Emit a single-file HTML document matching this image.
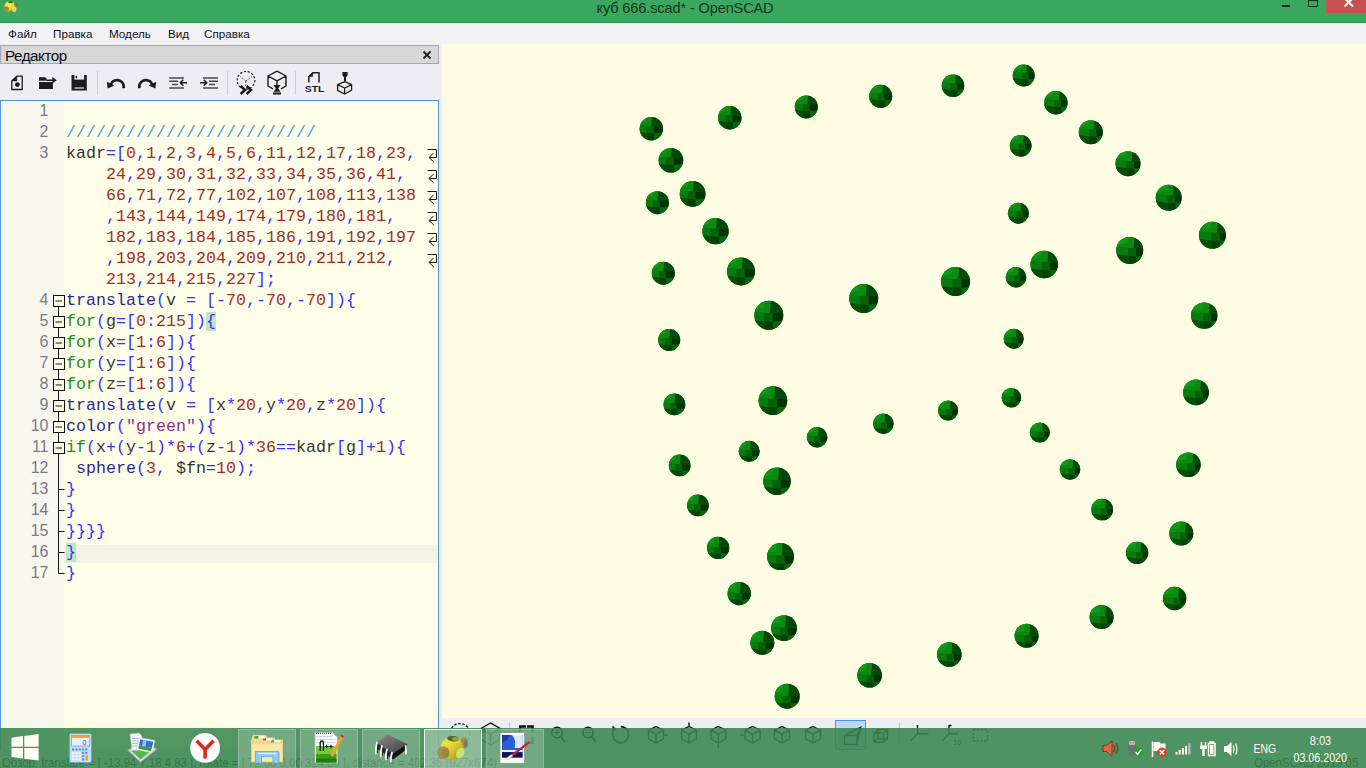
<!DOCTYPE html>
<html lang="ru">
<head>
<meta charset="utf-8">
<title>куб 666.scad* - OpenSCAD</title>
<style>
*{box-sizing:border-box;margin:0;padding:0}
html,body{width:1366px;height:768px;overflow:hidden}
body{position:relative;background:#eeeef2;font-family:"Liberation Sans",sans-serif;color:#000}
.abs{position:absolute}
#titlebar{left:0;top:0;width:1366px;height:23px;background:#3aa85e;border-bottom:1px solid #348f52}
#title{left:2px;top:-2px;width:1366px;text-align:center;font-size:14.5px;line-height:20px;color:#143522;letter-spacing:-.1px}
#wc-min{left:1282px;top:5px;width:8px;height:2px;background:#12301f}
#wc-max{left:1308px;top:0;width:10px;height:7px;border:1px solid #12301f}
#wc-close{left:1326px;top:0;width:40px;height:13px;background:#c75050}
#menubar{left:0;top:23px;width:1366px;height:21px;background:#f3f3f6;font-size:11.7px;line-height:21px;color:#10101c}
#menubar span{position:absolute;top:0}
#docktitle{left:0;top:45px;width:439px;height:19px;background:#d7d7d7;border:1px solid #a9a9a9;font-size:15.2px;line-height:20px;padding-left:4px;color:#0c0c18;letter-spacing:-.45px}
#toolbar{left:0;top:64px;width:439px;height:36px}
#editor{left:0;top:100px;width:439px;height:651px;border:1px solid #4f94de;background:#fefee9;overflow:hidden}
#margin{left:0;top:0;width:63px;height:100%;background:#f7f7ee}
#nums{left:0;top:-1px;width:47.5px;text-align:right;font-size:16px;line-height:21px;color:#7a7a88}
#code{left:65px;top:0;width:372px;font-family:"Liberation Mono",monospace;font-size:16.67px;line-height:21px;color:#1c1c1c;opacity:.9}
#code div,#nums div{height:21px;white-space:pre}
#code .cur{background:linear-gradient(rgba(0,0,0,0) 3px,#f2f2e5 3px);margin-left:-2px;padding-left:2px;width:374px}
.d{color:#1c1c1c}.o{color:#1c1cff}.n{color:#9b1414}.k{color:#0a800a}.m{color:#10108c}.s{color:#861486}.c{color:#2f98d4}
.br{background:#b4e6c4}
#view{left:442px;top:44px;width:924px;height:674px;background:#fefde4;overflow:hidden}
#vtoolbar{left:439px;top:718px;width:927px;height:32px;background:#eeeef2}
#statusbar{left:0;top:750px;width:1366px;height:18px;background:#eeeef2;font-size:12px;line-height:26px;color:#000;white-space:pre}
#taskbar{left:0;top:728px;width:1366px;height:40px;background:rgba(57,134,79,.88)}
.tb{position:absolute;top:1px;width:58px;height:39px;background:rgba(255,255,255,.2);border:1px solid rgba(255,255,255,.22);border-bottom:0}
.tb.act{background:rgba(255,255,255,.36);border-color:rgba(255,255,255,.85)}
#tray{font-size:12px;color:#fff}
</style>
</head>
<body>

<!-- ===== window title bar ===== -->
<div id="titlebar" class="abs"></div>
<div id="title" class="abs">куб 666.scad* - OpenSCAD</div>
<svg class="abs" style="left:2px;top:0" width="17" height="14" viewBox="0 0 17 14">
  <ellipse cx="8" cy="6.5" rx="5.6" ry="5.6" fill="#e8d534"/>
  <ellipse cx="6.5" cy="5" rx="3" ry="2.6" fill="#f4e84a"/>
  <ellipse cx="4" cy="9" rx="3" ry="2.8" fill="#a88a3a"/>
  <ellipse cx="12.3" cy="9.4" rx="2.2" ry="2.8" fill="#c6e070" transform="rotate(20 12.3 9.4)"/>
  <ellipse cx="8.5" cy="2" rx="2.3" ry="1.3" fill="#4f6a22"/>
  <ellipse cx="14" cy="4.5" rx="1.8" ry="2.3" fill="#8a7a28"/>
  <path d="M6 11.5 Q9 13.3 11 11.5 L10 9.5 Z" fill="#a8861c"/>
</svg>
<div id="wc-min" class="abs"></div>
<div id="wc-max" class="abs"></div>
<div id="wc-close" class="abs"></div>
<svg class="abs" style="left:1343px;top:-2px" width="12" height="12" viewBox="0 0 12 12"><path d="M1.5 0 L10 8.5 M10 0 L1.5 8.5" stroke="#fff" stroke-width="2" fill="none"/></svg>

<!-- ===== menu bar ===== -->
<div id="menubar" class="abs">
  <span style="left:8px">Файл</span><span style="left:53px">Правка</span><span style="left:109px">Модель</span><span style="left:168px">Вид</span><span style="left:204px">Справка</span>
</div>

<!-- ===== editor dock ===== -->
<div id="docktitle" class="abs">Редактор</div>
<svg class="abs" style="left:422px;top:50px" width="10" height="10" viewBox="0 0 10 10"><path d="M1.5 1.5 L8.5 8.5 M8.5 1.5 L1.5 8.5" stroke="#1e1e1e" stroke-width="1.8" fill="none"/></svg>

<svg id="toolbar" class="abs" width="439" height="36" viewBox="0 64 439 36" fill="none" stroke="#1c1c1c" stroke-width="1.500" stroke-linejoin="round">
  <!-- new -->
  <path d="M11.800 89.500 V81 L16.800 76.200 H22.200 V89.500 Z" stroke-width="1.300"/>
  <path d="M11.800 81 L16.800 76.200 V81 Z" fill="#1c1c1c" stroke-width=".500"/>
  <circle cx="17.400" cy="84.600" r="2.400" fill="#1c1c1c" stroke="none"/>
  <!-- open -->
  <path d="M39 77.200 H45 L46.600 78.600 V80.800 H39 Z" fill="#1c1c1c" stroke="none"/>
  <path d="M46.600 79.400 H52.400 V77 L56.800 80.200 L52.400 83.500 V81.100 H46.600 Z" fill="#1c1c1c" stroke="none"/>
  <path d="M39 82 H46.800 L48 82.100 H52.900 V88.900 H39 Z" fill="#1c1c1c" stroke="none"/>
  <!-- save -->
  <path d="M71.500 75 H86.800 V90.500 H71.500 Z" fill="#1c1c1c" stroke="none"/>
  <path d="M74.400 74.800 H84.100 V79.600 H74.400 Z" fill="#eeeef2" stroke="none"/>
  <path d="M75.600 75.800 h1.600 v2.400 h-1.600z" fill="#1c1c1c" stroke="none"/>
  <path d="M74.500 88 H84" stroke="#e4e4ea" stroke-width="1.200"/>
  <!-- sep -->
  <path d="M97.500 71 V95" stroke="#cfcfd6" stroke-width="1"/>
  <!-- undo -->
  <path d="M110.600 85.500 A6.600 6.600 0 0 1 123.700 86.500 V88.200" stroke-width="2.800" stroke-linejoin="miter"/>
  <path d="M106.800 81.800 L114.400 85.400 L107.600 88.600 Z" fill="#1c1c1c" stroke="none"/>
  <!-- redo -->
  <path d="M152.400 85.500 A6.600 6.600 0 0 0 139.300 86.500 V88.200" stroke-width="2.800" stroke-linejoin="miter"/>
  <path d="M156.200 81.800 L148.600 85.400 L155.400 88.600 Z" fill="#1c1c1c" stroke="none"/>
  <!-- unindent -->
  <path d="M169.200 78 H184 M169.200 81.200 H178 M172 84.500 H178 M169.200 88 H184" stroke="#4a4a4a" stroke-width="1.500"/>
  <path d="M187 82.800 H180.500 M183.300 79.800 L180.200 82.800 L183.300 85.800" stroke-width="1.500"/>
  <!-- indent -->
  <path d="M203 78 H218 M209 81.200 H218 M209 84.500 H215 M203 88 H218" stroke="#4a4a4a" stroke-width="1.500"/>
  <path d="M200 82.800 H206.500 M203.700 79.800 L206.800 82.800 L203.700 85.800" stroke-width="1.500"/>
  <!-- sep -->
  <path d="M227.500 71 V95" stroke="#cfcfd6" stroke-width="1"/>
  <!-- preview -->
  <circle cx="246" cy="80.300" r="8.800" stroke-width="1.200" stroke-dasharray="2.200 1.700"/>
  <path d="M245.800 81 V86 M245.800 81 L240 76.500 M245.800 81 L252 76.500" stroke-width="1" stroke="#5a5a5a" stroke-dasharray="2 1.200"/>
  <path d="M240.600 86 L245 90 L240.600 94 M246.600 86 L251 90 L246.600 94" stroke-width="2.500" stroke-linejoin="miter"/>
  <!-- render -->
  <path d="M277 71.200 L286 76 V86 L281 88.800 M273 88.800 L268 86 V76 L277 71.200 M268 76 L277 80.800 L286 76 M277 80.800 V85" stroke-width="1.400"/>
  <path d="M273.500 85 h7 l-2.300 3.400 h-2.400z M275.800 88.400 h2.400 l2.300 3.400 h-7z M273 92.600 h8 v1.800 h-8z" fill="#1c1c1c" stroke="none"/>
  <!-- sep -->
  <path d="M295.500 71 V95" stroke="#cfcfd6" stroke-width="1"/>
  <!-- STL -->
  <path d="M308.800 82.400 V76.500 L312.800 72.800 H319 V82.400" stroke-width="1.500"/>
  <path d="M308.800 76.500 L312.800 72.800 V76.500Z" fill="#1c1c1c" stroke-width=".400"/>
  <text x="304.700" y="91.900" font-family="Liberation Sans, sans-serif" font-weight="bold" font-size="9.200" fill="#1c1c1c" stroke="none" textLength="19.700" lengthAdjust="spacingAndGlyphs">STL</text>
  <!-- print -->
  <path d="M337.600 84.600 L344.800 81.600 L351.600 84.600 V90.200 L344.600 94 L337.600 90.400 Z M337.600 84.600 L344.600 88 L351.600 84.600 M344.600 88 V94" stroke-width="1.300"/>
  <path d="M342.400 72 h5.200 v3.400 l-1.600 1.800 v4 h-2 v-4 l-1.600 -1.800z" fill="#1c1c1c" stroke="none"/>
</svg>

<div id="editor" class="abs">
  <div id="margin" class="abs"></div>
  <div id="nums" class="abs">
<div>1</div><div>2</div><div>3</div><div></div><div></div><div></div><div></div><div></div><div></div><div>4</div><div>5</div><div>6</div><div>7</div><div>8</div><div>9</div><div>10</div><div>11</div><div>12</div><div>13</div><div>14</div><div>15</div><div>16</div><div>17</div>
  </div>
  <div id="code" class="abs">
<div>&nbsp;</div><div><span class="c">/////////////////////////</span></div><div><span class="d">kadr</span><span class="o">=[</span><span class="n">0</span><span class="o">,</span><span class="n">1</span><span class="o">,</span><span class="n">2</span><span class="o">,</span><span class="n">3</span><span class="o">,</span><span class="n">4</span><span class="o">,</span><span class="n">5</span><span class="o">,</span><span class="n">6</span><span class="o">,</span><span class="n">11</span><span class="o">,</span><span class="n">12</span><span class="o">,</span><span class="n">17</span><span class="o">,</span><span class="n">18</span><span class="o">,</span><span class="n">23</span><span class="o">,</span></div><div>    <span class="n">24</span><span class="o">,</span><span class="n">29</span><span class="o">,</span><span class="n">30</span><span class="o">,</span><span class="n">31</span><span class="o">,</span><span class="n">32</span><span class="o">,</span><span class="n">33</span><span class="o">,</span><span class="n">34</span><span class="o">,</span><span class="n">35</span><span class="o">,</span><span class="n">36</span><span class="o">,</span><span class="n">41</span><span class="o">,</span></div><div>    <span class="n">66</span><span class="o">,</span><span class="n">71</span><span class="o">,</span><span class="n">72</span><span class="o">,</span><span class="n">77</span><span class="o">,</span><span class="n">102</span><span class="o">,</span><span class="n">107</span><span class="o">,</span><span class="n">108</span><span class="o">,</span><span class="n">113</span><span class="o">,</span><span class="n">138</span></div><div>    <span class="o">,</span><span class="n">143</span><span class="o">,</span><span class="n">144</span><span class="o">,</span><span class="n">149</span><span class="o">,</span><span class="n">174</span><span class="o">,</span><span class="n">179</span><span class="o">,</span><span class="n">180</span><span class="o">,</span><span class="n">181</span><span class="o">,</span></div><div>    <span class="n">182</span><span class="o">,</span><span class="n">183</span><span class="o">,</span><span class="n">184</span><span class="o">,</span><span class="n">185</span><span class="o">,</span><span class="n">186</span><span class="o">,</span><span class="n">191</span><span class="o">,</span><span class="n">192</span><span class="o">,</span><span class="n">197</span></div><div>    <span class="o">,</span><span class="n">198</span><span class="o">,</span><span class="n">203</span><span class="o">,</span><span class="n">204</span><span class="o">,</span><span class="n">209</span><span class="o">,</span><span class="n">210</span><span class="o">,</span><span class="n">211</span><span class="o">,</span><span class="n">212</span><span class="o">,</span></div><div>    <span class="n">213</span><span class="o">,</span><span class="n">214</span><span class="o">,</span><span class="n">215</span><span class="o">,</span><span class="n">227</span><span class="o">];</span></div><div><span class="m">translate</span><span class="o">(</span><span class="d">v</span> <span class="o">=</span> <span class="o">[-</span><span class="n">70</span><span class="o">,-</span><span class="n">70</span><span class="o">,-</span><span class="n">70</span><span class="o">]){</span></div><div><span class="k">for</span><span class="o">(</span><span class="d">g</span><span class="o">=[</span><span class="n">0</span><span class="o">:</span><span class="n">215</span><span class="o">])</span><span class="o br">{</span></div><div><span class="k">for</span><span class="o">(</span><span class="d">x</span><span class="o">=[</span><span class="n">1</span><span class="o">:</span><span class="n">6</span><span class="o">]){</span></div><div><span class="k">for</span><span class="o">(</span><span class="d">y</span><span class="o">=[</span><span class="n">1</span><span class="o">:</span><span class="n">6</span><span class="o">]){</span></div><div><span class="k">for</span><span class="o">(</span><span class="d">z</span><span class="o">=[</span><span class="n">1</span><span class="o">:</span><span class="n">6</span><span class="o">]){</span></div><div><span class="m">translate</span><span class="o">(</span><span class="d">v</span> <span class="o">=</span> <span class="o">[</span><span class="d">x</span><span class="o">*</span><span class="n">20</span><span class="o">,</span><span class="d">y</span><span class="o">*</span><span class="n">20</span><span class="o">,</span><span class="d">z</span><span class="o">*</span><span class="n">20</span><span class="o">]){</span></div><div><span class="m">color</span><span class="o">(</span><span class="s">"green"</span><span class="o">){</span></div><div><span class="k">if</span><span class="o">(</span><span class="d">x</span><span class="o">+(</span><span class="d">y</span><span class="o">-</span><span class="n">1</span><span class="o">)*</span><span class="n">6</span><span class="o">+(</span><span class="d">z</span><span class="o">-</span><span class="n">1</span><span class="o">)*</span><span class="n">36</span><span class="o">==</span><span class="d">kadr</span><span class="o">[</span><span class="d">g</span><span class="o">]+</span><span class="n">1</span><span class="o">){</span></div><div> <span class="m">sphere</span><span class="o">(</span><span class="n">3</span><span class="o">,</span> <span class="d">$fn</span><span class="o">=</span><span class="n">10</span><span class="o">);</span></div><div><span class="o">}</span></div><div><span class="o">}</span></div><div><span class="o">}}}}</span></div><div class="cur"><span class="o br">}</span></div><div><span class="o">}</span></div>
  </div>
  <svg class="abs" style="left:49px;top:0" width="20" height="500" viewBox="0 0 20 500" fill="none" stroke="#101010" stroke-width="1">
<path d="M8.5 205.0 V472.5 H14.5" />
<path d="M8.5 388.5 H14.5"/>
<path d="M8.5 409.5 H14.5"/>
<path d="M8.5 430.5 H14.5"/>
<path d="M8.5 451.5 H14.5"/>
<rect x="3.5" y="194.5" width="11" height="11" fill="#fefeea"/>
<path d="M5.5 200.0 H12"/>
<rect x="3.5" y="215.5" width="11" height="11" fill="#fefeea"/>
<path d="M5.5 221.0 H12"/>
<rect x="3.5" y="236.5" width="11" height="11" fill="#fefeea"/>
<path d="M5.5 242.0 H12"/>
<rect x="3.5" y="257.5" width="11" height="11" fill="#fefeea"/>
<path d="M5.5 263.0 H12"/>
<rect x="3.5" y="278.5" width="11" height="11" fill="#fefeea"/>
<path d="M5.5 284.0 H12"/>
<rect x="3.5" y="299.5" width="11" height="11" fill="#fefeea"/>
<path d="M5.5 305.0 H12"/>
<rect x="3.5" y="320.5" width="11" height="11" fill="#fefeea"/>
<path d="M5.5 326.0 H12"/>
<rect x="3.5" y="341.5" width="11" height="11" fill="#fefeea"/>
<path d="M5.5 347.0 H12"/>
  </svg>
  <svg class="abs" style="left:426px;top:-1px" width="12" height="200" viewBox="0 0 12 200" fill="none" stroke="#181818" stroke-width="1">
<path transform="translate(0 42)" d="M0.5 7.5 H9.5 V15.5 H2 M6.5 11 L2 15.5 L6.8 20"/>
<path transform="translate(0 63)" d="M0.5 7.5 H9.5 V15.5 H2 M6.5 11 L2 15.5 L6.8 20"/>
<path transform="translate(0 84)" d="M0.5 7.5 H9.5 V15.5 H2 M6.5 11 L2 15.5 L6.8 20"/>
<path transform="translate(0 105)" d="M0.5 7.5 H9.5 V15.5 H2 M6.5 11 L2 15.5 L6.8 20"/>
<path transform="translate(0 126)" d="M0.5 7.5 H9.5 V15.5 H2 M6.5 11 L2 15.5 L6.8 20"/>
<path transform="translate(0 147)" d="M0.5 7.5 H9.5 V15.5 H2 M6.5 11 L2 15.5 L6.8 20"/>
  </svg>
</div>

<!-- ===== 3D view ===== -->
<div id="view" class="abs">
<svg width="924" height="674" viewBox="0 0 924 674">
  <defs>
    <clipPath id="cc"><circle r="1"/></clipPath>
    <g id="fc">
      <path d="M-1.700 -1.700 H1.700 V1.700 H-1.700Z" fill="#076e0a"/>
      <path d="M-1.700 -1.700 H0.200 L0.100 -0.180 L-0.320 -0.160 L-1.700 -0.260 Z" fill="#0b8a12"/>
      <path d="M-1.700 -1.700 L-0.150 -1.700 L-0.360 -0.520 L-1.700 -0.340 Z" fill="#12a01c" opacity=".600"/>
      <path d="M0.200 -1.700 H1.700 V-0.130 L0.280 -0.150 L0.100 -0.180 Z" fill="#034a08"/>
      <path d="M-1.700 -0.260 L-0.320 -0.160 L-0.300 0.420 L-1.700 0.240 Z" fill="#097a0e"/>
      <path d="M-0.320 -0.160 L0.280 -0.150 L0.300 0.450 L-0.300 0.420 Z" fill="#066208"/>
      <path d="M0.280 -0.150 L1.700 -0.130 V0.340 L0.300 0.450 Z" fill="#023204"/>
      <path d="M-1.700 0.240 L-0.300 0.420 L-0.200 1.700 H-1.700 Z" fill="#044f08"/>
      <path d="M-0.300 0.420 L0.300 0.450 L0.400 1.700 H-0.200 Z" fill="#033f06"/>
      <path d="M0.300 0.450 L1.700 0.340 V1.700 H0.400 Z" fill="#06660a"/>
    </g>
  </defs>
<g transform="translate(569.4 353.7) scale(9.75)" clip-path="url(#cc)"><use href="#fc" x="0.13" y="0.03"/></g>
<g transform="translate(506.1 366.6) scale(10.00)" clip-path="url(#cc)"><use href="#fc" x="0.10" y="0.04"/></g>
<g transform="translate(571.7 294.8) scale(10.00)" clip-path="url(#cc)"><use href="#fc" x="0.13" y="0.01"/></g>
<g transform="translate(597.8 388.6) scale(10.00)" clip-path="url(#cc)"><use href="#fc" x="0.15" y="0.04"/></g>
<g transform="translate(441.4 379.8) scale(10.25)" clip-path="url(#cc)"><use href="#fc" x="0.06" y="0.04"/></g>
<g transform="translate(375.1 393.3) scale(10.25)" clip-path="url(#cc)"><use href="#fc" x="0.02" y="0.05"/></g>
<g transform="translate(574.0 233.3) scale(10.25)" clip-path="url(#cc)"><use href="#fc" x="0.14" y="-0.01"/></g>
<g transform="translate(628.0 425.4) scale(10.25)" clip-path="url(#cc)"><use href="#fc" x="0.17" y="0.06"/></g>
<g transform="translate(307.2 407.3) scale(10.50)" clip-path="url(#cc)"><use href="#fc" x="-0.02" y="0.05"/></g>
<g transform="translate(576.4 169.2) scale(10.50)" clip-path="url(#cc)"><use href="#fc" x="0.14" y="-0.04"/></g>
<g transform="translate(232.4 360.4) scale(10.85)" clip-path="url(#cc)"><use href="#fc" x="-0.07" y="0.03"/></g>
<g transform="translate(237.7 421.4) scale(10.85)" clip-path="url(#cc)"><use href="#fc" x="-0.06" y="0.06"/></g>
<g transform="translate(255.9 461.3) scale(10.85)" clip-path="url(#cc)"><use href="#fc" x="-0.05" y="0.07"/></g>
<g transform="translate(578.7 101.8) scale(10.85)" clip-path="url(#cc)"><use href="#fc" x="0.14" y="-0.06"/></g>
<g transform="translate(660.2 465.5) scale(10.85)" clip-path="url(#cc)"><use href="#fc" x="0.19" y="0.07"/></g>
<g transform="translate(581.7 31.5) scale(11.00)" clip-path="url(#cc)"><use href="#fc" x="0.14" y="-0.09"/></g>
<g transform="translate(227.2 296.0) scale(11.00)" clip-path="url(#cc)"><use href="#fc" x="-0.07" y="0.01"/></g>
<g transform="translate(276.1 503.8) scale(11.15)" clip-path="url(#cc)"><use href="#fc" x="-0.04" y="0.09"/></g>
<g transform="translate(695.1 508.8) scale(11.15)" clip-path="url(#cc)"><use href="#fc" x="0.21" y="0.09"/></g>
<g transform="translate(511.0 41.8) scale(11.25)" clip-path="url(#cc)"><use href="#fc" x="0.10" y="-0.08"/></g>
<g transform="translate(364.3 62.9) scale(11.50)" clip-path="url(#cc)"><use href="#fc" x="0.01" y="-0.08"/></g>
<g transform="translate(438.7 52.3) scale(11.50)" clip-path="url(#cc)"><use href="#fc" x="0.06" y="-0.08"/></g>
<g transform="translate(215.4 158.7) scale(11.50)" clip-path="url(#cc)"><use href="#fc" x="-0.08" y="-0.04"/></g>
<g transform="translate(221.3 229.2) scale(11.50)" clip-path="url(#cc)"><use href="#fc" x="-0.07" y="-0.02"/></g>
<g transform="translate(209.3 84.8) scale(11.70)" clip-path="url(#cc)"><use href="#fc" x="-0.08" y="-0.07"/></g>
<g transform="translate(287.8 73.7) scale(11.70)" clip-path="url(#cc)"><use href="#fc" x="-0.03" y="-0.07"/></g>
<g transform="translate(613.9 58.7) scale(11.70)" clip-path="url(#cc)"><use href="#fc" x="0.16" y="-0.08"/></g>
<g transform="translate(297.2 549.6) scale(11.70)" clip-path="url(#cc)"><use href="#fc" x="-0.03" y="0.10"/></g>
<g transform="translate(732.6 554.5) scale(11.70)" clip-path="url(#cc)"><use href="#fc" x="0.23" y="0.10"/></g>
<g transform="translate(648.8 88.3) scale(12.00)" clip-path="url(#cc)"><use href="#fc" x="0.18" y="-0.07"/></g>
<g transform="translate(320.3 598.8) scale(12.00)" clip-path="url(#cc)"><use href="#fc" x="-0.01" y="0.12"/></g>
<g transform="translate(739.3 489.5) scale(12.00)" clip-path="url(#cc)"><use href="#fc" x="0.23" y="0.08"/></g>
<g transform="translate(659.6 573.0) scale(12.00)" clip-path="url(#cc)"><use href="#fc" x="0.19" y="0.11"/></g>
<g transform="translate(584.6 591.8) scale(12.00)" clip-path="url(#cc)"><use href="#fc" x="0.14" y="0.12"/></g>
<g transform="translate(228.9 116.2) scale(12.30)" clip-path="url(#cc)"><use href="#fc" x="-0.07" y="-0.06"/></g>
<g transform="translate(507.3 610.5) scale(12.30)" clip-path="url(#cc)"><use href="#fc" x="0.10" y="0.13"/></g>
<g transform="translate(427.6 631.3) scale(12.30)" clip-path="url(#cc)"><use href="#fc" x="0.05" y="0.13"/></g>
<g transform="translate(746.4 420.7) scale(12.30)" clip-path="url(#cc)"><use href="#fc" x="0.24" y="0.06"/></g>
<g transform="translate(686.0 119.7) scale(12.50)" clip-path="url(#cc)"><use href="#fc" x="0.20" y="-0.06"/></g>
<g transform="translate(345.2 652.2) scale(12.50)" clip-path="url(#cc)"><use href="#fc" x="0.00" y="0.14"/></g>
<g transform="translate(250.6 149.9) scale(12.90)" clip-path="url(#cc)"><use href="#fc" x="-0.06" y="-0.04"/></g>
<g transform="translate(342.0 584.1) scale(12.90)" clip-path="url(#cc)"><use href="#fc" x="-0.00" y="0.12"/></g>
<g transform="translate(754.0 348.4) scale(12.90)" clip-path="url(#cc)"><use href="#fc" x="0.24" y="0.03"/></g>
<g transform="translate(726.7 153.7) scale(13.00)" clip-path="url(#cc)"><use href="#fc" x="0.23" y="-0.04"/></g>
<g transform="translate(273.5 187.1) scale(13.20)" clip-path="url(#cc)"><use href="#fc" x="-0.04" y="-0.03"/></g>
<g transform="translate(762.2 271.6) scale(13.20)" clip-path="url(#cc)"><use href="#fc" x="0.25" y="0.00"/></g>
<g transform="translate(770.4 191.2) scale(13.50)" clip-path="url(#cc)"><use href="#fc" x="0.25" y="-0.03"/></g>
<g transform="translate(338.5 512.6) scale(13.50)" clip-path="url(#cc)"><use href="#fc" x="-0.00" y="0.09"/></g>
<g transform="translate(687.7 206.4) scale(13.50)" clip-path="url(#cc)"><use href="#fc" x="0.20" y="-0.02"/></g>
<g transform="translate(335.0 437.3) scale(13.75)" clip-path="url(#cc)"><use href="#fc" x="-0.01" y="0.06"/></g>
<g transform="translate(602.2 220.5) scale(13.75)" clip-path="url(#cc)"><use href="#fc" x="0.15" y="-0.02"/></g>
<g transform="translate(299.0 227.4) scale(14.00)" clip-path="url(#cc)"><use href="#fc" x="-0.03" y="-0.02"/></g>
<g transform="translate(330.9 356.6) scale(14.35)" clip-path="url(#cc)"><use href="#fc" x="-0.01" y="0.03"/></g>
<g transform="translate(326.8 271.3) scale(14.50)" clip-path="url(#cc)"><use href="#fc" x="-0.01" y="0.00"/></g>
<g transform="translate(421.7 254.4) scale(14.50)" clip-path="url(#cc)"><use href="#fc" x="0.05" y="-0.01"/></g>
<g transform="translate(513.5 237.6) scale(14.50)" clip-path="url(#cc)"><use href="#fc" x="0.10" y="-0.01"/></g>
</svg>
</div>

<!-- ===== view toolbar + status bar (under the translucent taskbar) ===== -->
<div id="vtoolbar" class="abs"></div>
<div class="abs" style="left:835px;top:720px;width:31px;height:30px;background:#bcd8f6;border:1px solid #4f93e0"></div>
<svg class="abs" style="left:439px;top:718px" width="927" height="32" viewBox="439 718 927 32" fill="none" stroke="#101010" stroke-width="1.400">
  <circle cx="460" cy="733.600" r="10" stroke-dasharray="2.400 1.700"/>
  <path d="M481 728.500 L490.500 723 L500 728.500 V739.500 L490.500 745 L481 739.500Z M481 728.500 L490.500 734 L500 728.500 M490.500 734 V745"/>
  <path d="M509.500 723 V746" stroke="#c4c4cc"/>
  <path d="M520.200 732 V726.400 H526 M532.600 732 V726.400 H527 M520.200 737 V742.500 H526 M532.600 737 V742.500 H527" stroke-width="2.500"/>
  <circle cx="557" cy="732.500" r="5.200"/><path d="M560.600 736.500 L565 742" stroke-width="2"/><path d="M554.500 732.500 h5 M557 730 v5" stroke-width="1"/>
  <circle cx="588" cy="732.500" r="5.200"/><path d="M591.600 736.500 L596 742" stroke-width="2"/><path d="M585.500 732.500 h5" stroke-width="1"/>
  <path d="M615.500 728.500 A8 8 0 1 0 620.800 726.600" stroke-width="1.600"/><path d="M613 726 l3.500 3.800 l-4.600 1z" fill="#151515" stroke-width=".6"/>
  <path d="M656.0 726.5 l7.5 3.8 v8.6 l-7.500 4 l-7.500 -4 v-8.600z M648.5 730.3 l7.500 3.900 l7.500 -3.900 M656.0 734.2 v8.500 M664 735 l4 0"/>
  <path d="M689.0 726.5 l7.5 3.8 v8.6 l-7.500 4 l-7.500 -4 v-8.600z M681.5 730.3 l7.500 3.900 l7.500 -3.900 M689.0 734.2 v8.500 M689 722.500 v4"/>
  <path d="M718.4 726.5 l7.5 3.8 v8.6 l-7.500 4 l-7.500 -4 v-8.600z M710.9 730.3 l7.500 3.900 l7.500 -3.900 M718.4 734.2 v8.500 M718.400 744 v4"/>
  <path d="M752.6 726.5 l7.5 3.8 v8.6 l-7.500 4 l-7.500 -4 v-8.600z M745.1 730.3 l7.500 3.900 l7.500 -3.900 M752.6 734.2 v8.500 M744 735 l-4 0"/>
  <path d="M782.0 726.5 l7.5 3.8 v8.6 l-7.500 4 l-7.500 -4 v-8.600z M774.5 730.3 l7.500 3.900 l7.500 -3.900 M782.0 734.2 v8.500 "/>
  <path d="M813.0 726.5 l7.5 3.8 v8.6 l-7.500 4 l-7.500 -4 v-8.600z M805.5 730.3 l7.500 3.900 l7.500 -3.900 M813.0 734.2 v8.500 "/>
  <path d="M844.500 735.500 h12.300 v9 h-12.300z M844.500 735.500 L860.500 727.500 L856.800 735.500 M856.800 744.500 L860.500 727.500"/>
  <path d="M874 733 h9.500 v9 h-9.500z M878 729.500 h9.500 v9 h-9.500z M874 733 l4 -3.500 M883.500 733 l4 -3.500 M883.500 742 l4 -3.500 M874 742 l4 -3.500"/>
  <path d="M899.500 723 V746" stroke="#c4c4cc"/>
  <path d="M917.500 725 V733.800 H928.500 M917.500 733.800 L910.500 741"/>
  <path d="M949 725 V733.800 H958 M949 733.800 L942 741 M949 725.500 h2.500"/>
  <text x="953" y="745" font-family="Liberation Sans, sans-serif" font-size="7.500" fill="#151515" stroke="none">10</text>
  <path d="M973.500 729.500 h14 v11.500 h-14z" stroke-dasharray="2.200 1.600"/>
</svg>
<div class="abs" style="left:0;top:750px;width:439px;height:1px;background:#9a9aa2"></div>
<div id="statusbar" class="abs"><span style="position:absolute;left:2px;top:0;transform-origin:0 0;transform:scaleX(.875);font-size:13px">Обзор: translate = [ -13.94 7.18 4.83 ], rotate = [ 72.60 0.00 324.80 ], distance = 402.35 (927x674)</span><span style="position:absolute;left:1254px;top:0;font-size:13px;transform-origin:0 0;transform:scaleX(.88)">OpenSCAD 2019.05</span></div>

<!-- ===== Windows taskbar (translucent) ===== -->
<div id="taskbar" class="abs">
  <div class="tb" style="left:238px"></div>
  <div class="tb" style="left:300px"></div>
  <div class="tb" style="left:362px"></div>
  <div class="tb act" style="left:424px"></div>
  <div class="tb" style="left:486px"></div>
</div>

<svg class="abs" style="left:0;top:728px" width="1366" height="40" viewBox="0 728 1366 40">
  <!-- start -->
  <g fill="#fffff2">
    <path d="M11.5 737.7 L23 736.1 V746.8 H11.5Z"/><path d="M11.5 748 H23 V758.6 L11.5 757Z"/>
    <path d="M24.3 735.9 L38.6 734 V746.8 H24.3Z"/><path d="M24.3 748 H38.6 V760.6 L24.3 758.8Z"/>
  </g>
  <!-- calculator -->
  <g>
    <rect x="69.5" y="733.5" width="22" height="29" rx="1.5" fill="#c4def8" stroke="#6fa4e0"/>
    <rect x="71.5" y="735.5" width="18" height="10.5" fill="#e6f0fc" stroke="#7aa0d6" stroke-width=".8"/>
    <rect x="72" y="736" width="17" height="2" fill="#f2a23a"/>
    <text x="82.5" y="744.6" font-family="Liberation Sans, sans-serif" font-size="7" fill="#334a80">0</text>
    <g fill="#5f90c8"><rect x="72" y="748.5" width="2.2" height="2"/><rect x="75.3" y="748.5" width="2.2" height="2"/><rect x="78.6" y="748.5" width="2.2" height="2"/><rect x="81.9" y="748.5" width="2.2" height="2"/><rect x="85.2" y="748.5" width="2.2" height="2"/>
    <rect x="81.9" y="751.8" width="2.2" height="2"/><rect x="85.2" y="751.8" width="2.2" height="2"/><rect x="81.9" y="755.1" width="2.2" height="2"/><rect x="81.9" y="758.4" width="2.2" height="2"/></g>
    <g fill="#fdf6e4"><rect x="72" y="751.8" width="2.2" height="2"/><rect x="75.3" y="751.8" width="2.2" height="2"/><rect x="78.6" y="751.8" width="2.2" height="2"/>
    <rect x="72" y="755.1" width="2.2" height="2"/><rect x="75.3" y="755.1" width="2.2" height="2"/><rect x="78.6" y="755.1" width="2.2" height="2"/>
    <rect x="72" y="758.4" width="2.2" height="2"/><rect x="75.3" y="758.4" width="2.2" height="2"/><rect x="78.6" y="758.4" width="2.2" height="2"/></g>
    <rect x="85.6" y="755" width="2.2" height="5.5" fill="#f09a20"/>
  </g>
  <!-- photo/scan -->
  <g>
    <path d="M127.5 750 L140.5 762.5 L157 749 L144 742Z" fill="#d6d9dc" stroke="#8a8f94" stroke-width=".8"/>
    <path d="M131.5 751 L140.5 759.5 L152 750 L143 745Z" fill="#58b848"/>
    <path d="M130 734 L139 733 L142 736 L141.5 750 L132 750.5Z" fill="#fbfbfb" stroke="#b9bcc4" stroke-width=".7"/>
    <path d="M132 738.5h7M132 741h7M132 743.5h6M132 746h6" stroke="#8fb0e0" stroke-width=".9"/>
    <path d="M139 737.5 L155 740.5 L152 753 L136.5 749.5Z" fill="#f8f8f8" stroke="#c8c8c8" stroke-width=".5"/>
    <path d="M140.3 739.3 L153.3 741.8 L151.8 748 L139 745.5Z" fill="#2f6fd8"/>
    <path d="M139 745.5 L151.8 748 L151 751.3 L138.2 748.6Z" fill="#3c9a3a"/>
    <path d="M143 740 L146.5 740.6 L145.6 746.6 L142 746Z" fill="#8cc4f4"/>
  </g>
  <!-- yandex -->
  <circle cx="205.1" cy="747.9" r="14.9" fill="#fdfbfb"/>
  <path d="M196.6 740.7 L205.1 749.4 L213.6 740.7 M205.1 749 V758.6" stroke="#d62c1e" stroke-width="3.6" fill="none" stroke-linejoin="miter"/>
  <!-- explorer -->
  <g>
    <path d="M251 741 l2 -6 h13 l1.5 2.5 h7 l1 2 h7.5 v22.5 h-32z" fill="#f2d98c"/>
    <rect x="254.5" y="736.2" width="4" height="2.3" fill="#22a638"/><rect x="263" y="738.2" width="3" height="2.3" fill="#d8482c"/><rect x="271" y="740.2" width="3.2" height="2.3" fill="#2f8ee8"/>
    <rect x="258.5" y="736.2" width="7" height="2.3" fill="#fdf8e4"/><rect x="266" y="738.2" width="6" height="2.3" fill="#fdf8e4"/><rect x="274.2" y="740.2" width="6" height="2.3" fill="#fdf8e4"/>
    <path d="M251.5 743 h31 v19 h-31z" fill="#f9e8a8" stroke="#e6c976" stroke-width=".8"/>
    <path d="M255.5 751.5 h23.5 v11.5 h-6 v-6.5 h-11.5 v6.5 h-6z" fill="#8dccf4" stroke="#5aa6e2" stroke-width=".8"/>
    <path d="M258 753.5 h18.5" stroke="#d8f0fc" stroke-width="1.4"/>
  </g>
  <!-- notepad++ -->
  <g>
    <path d="M315 732.5 h17.5 l5 4.5 v26 h-22.5z" fill="#fdfdfd" stroke="#b8b8b8" stroke-width=".8"/>
    <path d="M316 746 h20.5 v16.5 h-20.5z" fill="#7cc83c"/>
    <path d="M316 754 h20.5 v8.5 h-20.5z" fill="#3a9e22"/>
    <path d="M316 758.5 h20.5 v4 h-20.5z" fill="#1d7d14"/>
    <path d="M316.5 736.5h16M316.5 739.5h20M316.5 742.5h20" stroke="#c6d6f2" stroke-width="1"/>
    <path d="M316 733.4 h16" stroke="#444" stroke-width="1" stroke-dasharray="1 1"/>
    <path d="M320.2 751 V742.5 Q320.2 741 321.8 741 Q323.4 741 323.4 742.5 V751" stroke="#111" stroke-width="1.3" fill="none"/>
    <path d="M325 746.5h3.4M326.7 744.8v3.4M329.3 746.5h3.4M331 744.8v3.4" stroke="#111" stroke-width="1.1"/>
    <path d="M341.5 734.5 L344 736.3 L333.5 756 L330.6 757.8 L330.9 754.3Z" fill="#f0a22a"/>
    <path d="M341.5 734.5 L344 736.3 L343 738 L340.6 736.2Z" fill="#c42a50"/>
    <path d="M330.6 757.8 L330.75 756 L332 756.9Z" fill="#222"/>
  </g>
  <!-- chip -->
  <g>
    <defs><linearGradient id="cg" x1="0" y1="0" x2="1" y2="1"><stop offset="0" stop-color="#8e8e8e"/><stop offset="1" stop-color="#3c3c3c"/></linearGradient></defs><path d="M376 742.5 L387.5 734.5 L407 744 L393 753.5Z" fill="url(#cg)"/>
    <path d="M393 753.5 L407 744 V749 L393 759.5Z" fill="#101010"/>
    <path d="M376 742.5 L393 753.5 V759.5 L376 748Z" fill="#2c2c2c"/>
    <g stroke="#fbfbfb" stroke-width="1.8" stroke-linecap="round" fill="none"><path d="M377 742.5 Q375.5 748 375.8 753.5"/><path d="M382 746 Q380.5 751 380.8 756.5"/><path d="M387 749.5 Q385.5 754 385.8 759.5"/><path d="M392 752.5 Q390.5 757 390.8 761.5"/><path d="M405.8 746 V753.5"/></g>
    <g stroke="#1a1a1a" stroke-width=".9" fill="none"><path d="M378.4 744 Q377.2 748.5 377.4 753"/><path d="M383.4 747.3 Q382.2 751.5 382.4 756"/><path d="M388.4 750.6 Q387.2 754.5 387.4 759"/></g>
  </g>
  <!-- openscad -->
  <g>
    <defs><linearGradient id="og" x1="0" y1="0" x2="1" y2="1"><stop offset="0" stop-color="#fbec40"/><stop offset=".45" stop-color="#e8d136"/><stop offset="1" stop-color="#9c841a"/></linearGradient></defs>
    <ellipse cx="464" cy="743" rx="4" ry="5.800" fill="#a48c44"/>
    <ellipse cx="466" cy="743.500" rx="1.800" ry="4" fill="#6f7a78"/>
    <ellipse cx="452" cy="748.300" rx="11.200" ry="11.300" fill="url(#og)"/>
    <ellipse cx="443.300" cy="752.600" rx="6.200" ry="6.400" fill="#a98c4a"/>
    <ellipse cx="445.500" cy="753.500" rx="3.600" ry="4.200" fill="#8f8a40"/>
    <ellipse cx="460.300" cy="753" rx="3.900" ry="5.600" fill="#c6e66c" transform="rotate(28 460.300 753)"/>
    <ellipse cx="453" cy="738.700" rx="6" ry="2.700" fill="#4d6a2a" transform="rotate(4 453 738.700)"/>
    <ellipse cx="455.500" cy="738.900" rx="3.200" ry="1.900" fill="#9aa83e"/>
  </g>
  <!-- paint -->
  <g>
    <rect x="500" y="732.7" width="24.5" height="30.5" fill="#fbfbf6" stroke="#8a8a8a" stroke-width=".6"/>
    <rect x="502" y="735" width="20.5" height="22.5" fill="#2a5ed6"/>
    <path d="M512 735 h10.5 v13 h-8 Q517 741 512 735z" fill="#dfe8fa"/>
    <path d="M502 735 h8 l-3 5 l-5 3z" fill="#1a3ea8"/>
    <rect x="502" y="750" width="20.5" height="2.2" fill="#eef2fa"/>
    <rect x="502" y="752.2" width="20.5" height="5.3" fill="#0c1250"/>
    <path d="M528.6 741.2 L530 743 L513 756 L511.4 754.2Z" fill="#d0242a"/>
    <path d="M511.4 754.2 L513 756 L508 760 L506 758.5Z" fill="#f4f4f4" stroke="#888" stroke-width=".4"/>
  </g>

  <!-- tray -->
  <g>
    <path d="M1103 745.5 h3.5 l5.5 -4.5 v15 l-5.5 -4.5 h-3.5z" fill="#e8643c" stroke="#8a1c10" stroke-width=".8"/>
    <path d="M1114 744.5 q1.6 4 0 8 M1116.6 743 q2.4 5.500 0 11" stroke="#8a2414" stroke-width="1" fill="none"/>
    <path d="M1129 741 h6 v4 h-6z" fill="#d8d8e0" stroke="#777" stroke-width=".6"/>
    <path d="M1128 745 h8 v7 l-2.500 4 h-3 l-2.500 -4z" fill="#70707c"/>
    <path d="M1130.500 742.300 h1 v1.200 h-1z M1132.700 742.300 h1 v1.200 h-1z" fill="#444"/>
    <circle cx="1138.300" cy="752" r="4.900" fill="#22a62c"/>
    <path d="M1135.600 752 l2 2.400 l3.600 -4.800" stroke="#fff" stroke-width="1.500" fill="none"/>
    <path d="M1152.500 741.500 V757" stroke="#fffff2" stroke-width="1.600"/>
    <path d="M1153.500 742 h6 l1 1.500 h5 v7.500 h-12z" fill="#fffff2"/>
    <circle cx="1162" cy="752.300" r="4.700" fill="#dc3a30"/>
    <path d="M1159.800 750.100 l4.400 4.400 M1164.200 750.100 l-4.400 4.400" stroke="#fff" stroke-width="1.500"/>
    <g fill="#fffff2"><rect x="1175.500" y="752" width="2" height="2.500"/><rect x="1178.700" y="750" width="2" height="4.500"/><rect x="1181.900" y="748" width="2" height="6.500"/><rect x="1185.100" y="745.800" width="2" height="8.700"/><rect x="1188.300" y="743.500" width="2.200" height="11" fill="#b9c2c8"/></g>
    <path d="M1201.500 742 v3.500 M1205.500 742 v3.500" stroke="#fffff2" stroke-width="1.500"/>
    <path d="M1200 745.500 h7 v3.500 h-2.300 v7 h-2.400 v-7 h-2.300z" fill="#fffff2"/>
    <path d="M1208.500 743.500 h6.500 v12 h-6.500z M1210 742 h3.500 v1.500 h-3.500z" fill="none" stroke="#fffff2" stroke-width="1.500"/>
    <path d="M1210 745 h3.500 v9 h-3.500z" fill="#fffff2"/>
    <path d="M1224 746 h3 l4.500 -4 v14 l-4.500 -4 h-3z" fill="#fffff2"/>
    <path d="M1233.300 745.500 q1.500 3.500 0 7 M1235.600 743.500 q2.600 5.500 0 11" stroke="#fffff2" stroke-width="1.200" fill="none"/>
  </g>
  <g id="tray" font-family="Liberation Sans, sans-serif" font-size="12" fill="#fffff4">
    <text x="1253.500" y="752.800" textLength="22.500" lengthAdjust="spacingAndGlyphs">ENG</text>
    <text x="1309.700" y="745.300" textLength="21.500" lengthAdjust="spacingAndGlyphs">8:03</text>
    <text x="1293.500" y="762.300" textLength="53.500" lengthAdjust="spacingAndGlyphs">03.06.2020</text>
  </g>
</svg>

</body>
</html>
